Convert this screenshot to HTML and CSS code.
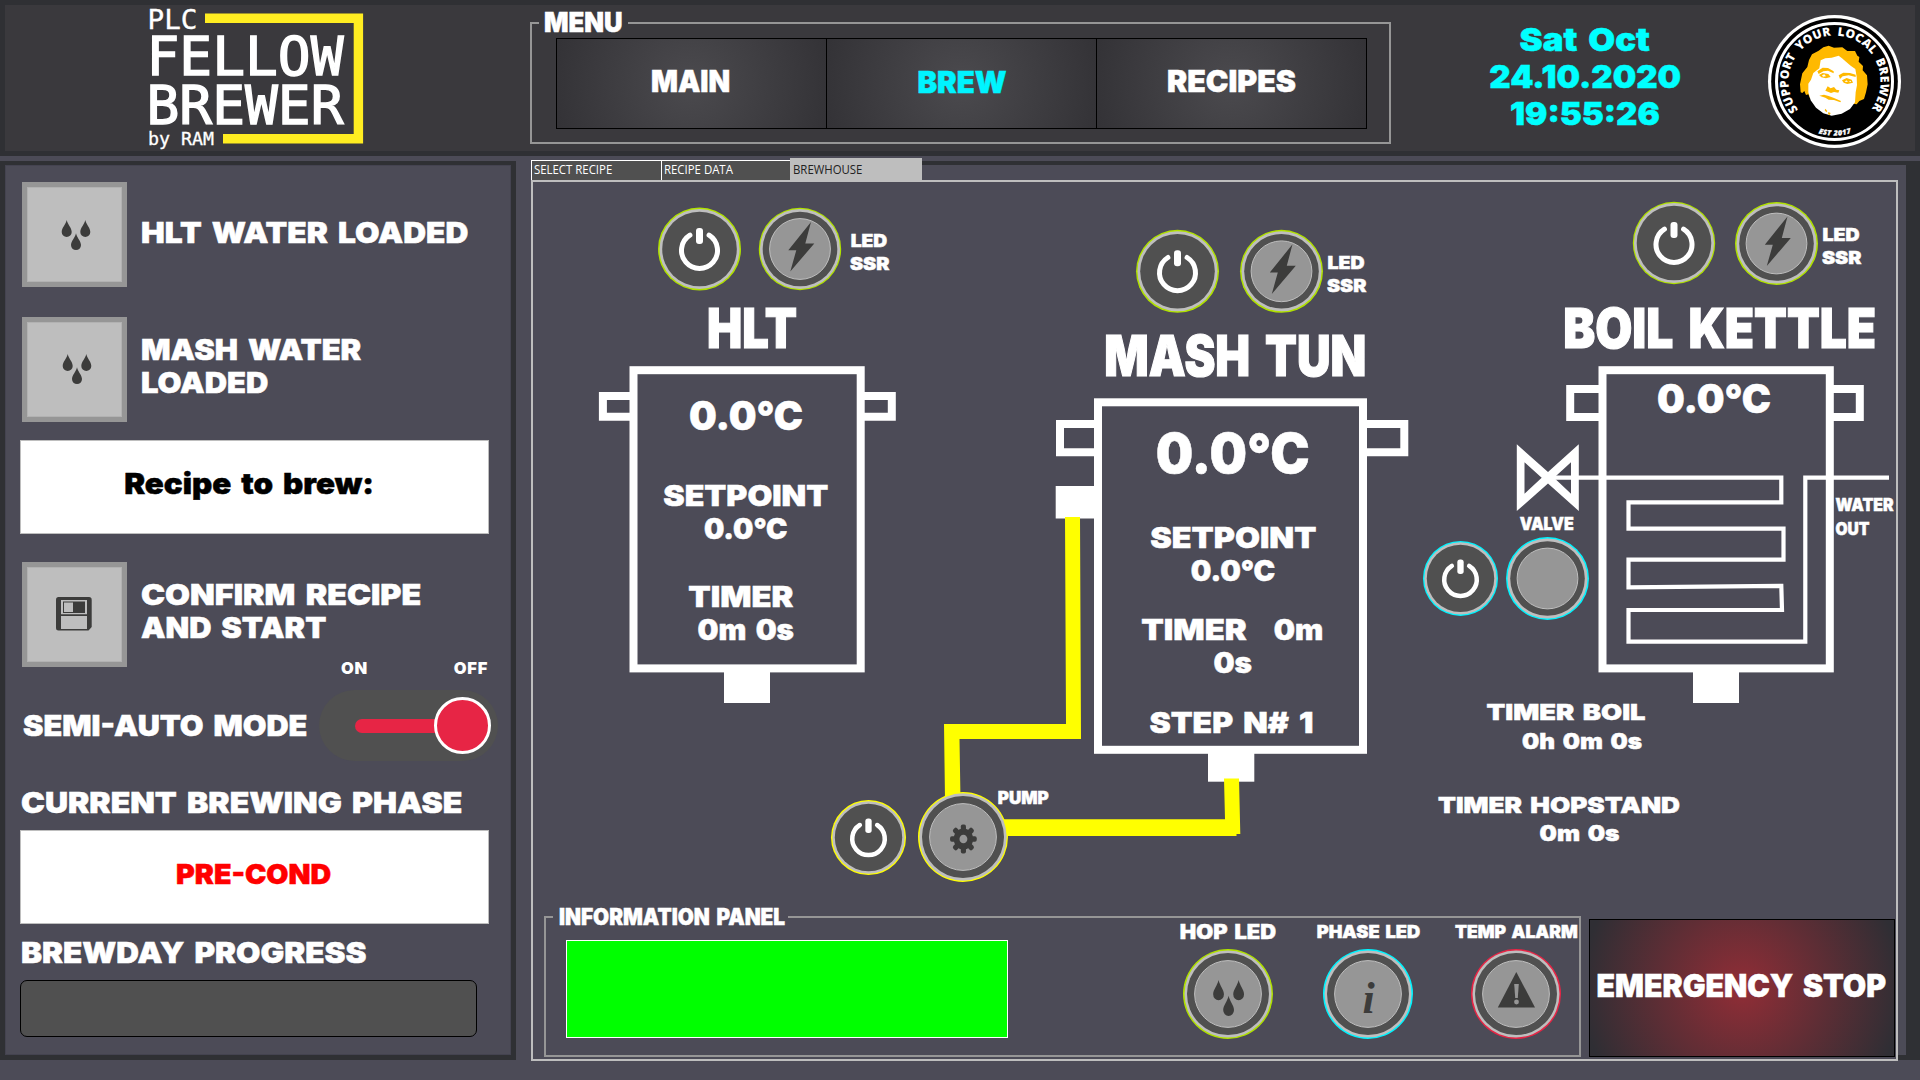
FILE: index.html
```
<!DOCTYPE html>
<html lang="en">
<head>
<meta charset="utf-8">
<title>Fellow Brewer PLC</title>
<link rel="stylesheet" href="styles.css">
</head>
<body>
<svg class="defs" width="0" height="0" aria-hidden="true">
  <defs>
    <path id="drop" d="M0,-8.5 C1,-4 5,-0.5 5,3.4 A5,5 0 0 1 -5,3.4 C-5,-0.5 -1,-4 0,-8.5Z"/>
    <g id="drops"><use href="#drop" x="-9.3" y="-6.5"/><use href="#drop" x="9.3" y="-6.5"/><use href="#drop" x="0" y="6.7"/></g>
    <g id="power">
      <circle r="40" fill="#bebebe"/><circle r="37.3" fill="#505050"/>
      <path d="M-9.6,-13.8 A18,18 0 1 0 9.6,-13.8" fill="none" stroke="#fff" stroke-width="5" stroke-linecap="round"/>
      <rect x="-3.5" y="-21" width="7" height="16" rx="3" fill="#fff"/>
    </g>
    <g id="lamp">
      <circle r="40" fill="#bebebe"/><circle r="37.3" fill="#505050"/>
      <circle r="30.4" fill="#969696" stroke="#bebebe" stroke-width="1"/>
    </g>
    <path id="bolt" d="M11,-27 L5.3,-5.6 L14.3,-5.6 L-9.7,22.6 L-3.7,1.2 L-11.7,1.2Z" fill="#3c3c3b"/>
    <rect id="tooth" x="-2.8" y="-14.5" width="5.6" height="7" rx="2"/>
  </defs>
</svg>

<header class="topbar">
  <svg class="logo" viewBox="140 5 230 146" width="230" height="146">
    <path d="M205,18.3 H358.4 V138.8 H223" fill="none" stroke="#ffed21" stroke-width="9.4"/>
    <g class="pixel">
      <text x="147.500" y="29" font-size="26.500" textLength="50" lengthAdjust="spacingAndGlyphs">PLC</text>
      <text class="big" x="146.500" y="75" font-size="53" textLength="197" lengthAdjust="spacingAndGlyphs">FELLOW</text>
      <text class="big" x="146.500" y="124" font-size="53" textLength="197" lengthAdjust="spacingAndGlyphs">BREWER</text>
      <text x="148" y="144.500" font-size="17" textLength="66" lengthAdjust="spacingAndGlyphs">by RAM</text>
    </g>
  </svg>

  <fieldset class="menu">
    <legend><span class="sx">MENU</span></legend>
    <nav>
      <a class="item main"><span class="sx">MAIN</span></a>
      <a class="item brew"><span class="sx">BREW</span></a>
      <a class="item recipes"><span class="sx">RECIPES</span></a>
    </nav>
  </fieldset>

  <div class="clock">
    <span class="sx day">Sat Oct</span>
    <span class="sx">24.10.2020</span>
    <span class="sx">19:55:26</span>
  </div>

  <svg class="badge" viewBox="21 27 405 405" width="135" height="135">
    <circle cx="223.500" cy="229.500" r="199.500" fill="#fff"/>
    <circle cx="223.500" cy="229.500" r="190" fill="#000"/>
    <circle cx="223.500" cy="229.500" r="174" fill="none" stroke="#fff" stroke-width="9"/>
    <path id="arcTop" d="M114.800,314.500 A138,138 0 1 1 332.200,314.500" fill="none"/>
    <path id="arcBottom" d="M169.500,382.500 A162,162 0 0 0 277.500,382.500" fill="none"/>
    <text class="ring"><textPath href="#arcTop" textLength="612">SUPPORT YOUR LOCAL BREWER</textPath></text>
    <text class="est"><textPath href="#arcBottom" startOffset="6" textLength="100">EST 2017</textPath></text>
    <path fill="#ffb900" d="M122,262 L120,238 L127,205 L142,186 L147,165 L156,148 L176,137 L190,127 L206,122 L222,128 L247,127 L262,138 L285,138 L292,152 L298,156 L296,170 L309,183 L308,196 L321,211 L323,238 L318,262 L312,282 L298,288 L290,298 L280,296 L150,280 L145,268 L138,270 L133,258 L127,264Z"/>
    <path fill="#fff" d="M182,166 L196,160 L215,158 L236,152 L246,160 L258,170 L272,182 L286,192 L290,215 L291,240 L287,262 L285,292 L270,312 L245,326 L215,332 L190,325 L168,308 L152,286 L145,262 L145,236 L153,224 L160,204 L178,190Z"/>
    <path fill="#ffb900" d="M172,199 L188,188 L204,189 L221,199 L221,205 L204,197 L190,199 L176,207Z M177,210 L188,204 L205,207 L212,216 L198,220 L184,217Z M236,211 L250,203 L270,204 L287,209 L287,216 L266,211 L248,214 L240,222Z M246,226 L260,219 L275,224 L279,233 L262,237 L251,233Z M203,244 L212,250 L222,246 L229,254 L238,256 L235,263 L222,261 L213,264 L196,257Z M178,272 L192,269 L206,273 L222,279 L243,288 L241,292 L222,285 L206,284 L196,278Z M196,311 L202,318 L199,322 L194,316Z M205,321 L212,324 L209,330 L204,328Z"/>
    <path fill="#fff" d="M186,211 L193,208 L198,214 L189,215Z M254,230 L259,226 L264,231Z M266,228 L273,228 L272,232Z"/>
  </svg>
</header>

<main>
  <aside class="side">
    <div class="action">
      <button class="tile"><svg viewBox="-49 -48 95 95"><use href="#drops" fill="#3c3c3b"/></svg></button>
      <div class="text"><span class="sx hlt">HLT WATER LOADED</span></div>
    </div>
    <div class="action second">
      <button class="tile"><svg viewBox="-50 -47 95 95"><use href="#drops" fill="#3c3c3b"/></svg></button>
      <div class="text up"><span class="sx mash">MASH WATER</span><span class="sx mash">LOADED</span></div>
    </div>
    <div class="readout recipe"><span class="sx">Recipe to brew:</span></div>
    <div class="action third">
      <button class="tile"><svg viewBox="0 0 95 95">
        <path fill="#3c3c3b" d="M31.500,30 H62 Q64.700,30 64.700,32.700 V60 L61.500,63.500 H31.500 Q29,63.500 29,61 V32.700 Q29,30 31.500,30Z"/>
        <path fill="#bebebe" d="M34,33 H60 V47.300 H34Z M34,49 H60 V62 H34Z"/>
        <path fill="#3c3c3b" d="M36,34.500 H58 V46 H36Z"/><path fill="#bebebe" d="M37,35.500 H46 V45 H37Z"/>
      </svg></button>
      <div class="text up"><span class="sx confirm">CONFIRM RECIPE</span><span class="sx start">AND START</span></div>
    </div>
    <div class="mode">
      <span class="sx mode-name">SEMI-AUTO MODE</span>
      <div class="switch">
        <div class="ends"><span>ON</span><span>OFF</span></div>
        <div class="track"><i class="bar"></i><i class="knob"></i></div>
      </div>
    </div>
    <h2 class="phase-title"><span class="sx">CURRENT BREWING PHASE</span></h2>
    <div class="readout phase"><span class="sx">PRE-COND</span></div>
    <h2 class="progress-title"><span class="sx">BREWDAY PROGRESS</span></h2>
    <div class="progress"></div>
  </aside>

  <section class="work">
    <div class="tabs">
      <div class="tab"><span>SELECT RECIPE</span></div>
      <div class="tab"><span>RECIPE DATA</span></div>
      <div class="tab active"><span>BREWHOUSE</span></div>
      <div class="edge-top"></div>
    </div>
    <div class="row">
      <div class="page">
        <svg class="plant" viewBox="533 182 1363 723" width="1363" height="723">
          <!-- HLT -->
          <g transform="translate(699.500,249)"><circle r="41.500" class="lime"/><use href="#power"/></g>
          <g transform="translate(800,249)"><circle r="41.200" class="lime"/><use href="#lamp"/><use href="#bolt"/></g>
          <g class="vessel">
            <rect x="633.500" y="370.200" width="227.200" height="298.200"/>
            <path d="M633,396 H602.900 V416.800 H633 M861,396 H891.800 V416.800 H861"/>
          </g>
          <rect x="724" y="670" width="46" height="33" fill="#fff"/>
          <!-- mash tun -->
          <g transform="translate(1177.500,271.300)"><circle r="41.500" class="lime"/><use href="#power"/></g>
          <g transform="translate(1281.500,271.300)"><circle r="41.500" class="lime"/><use href="#lamp"/><use href="#bolt"/></g>
          <g class="vessel">
            <rect x="1098" y="402.300" width="265" height="347.500"/>
            <path d="M1098,424 H1060 V452.300 H1098 M1363,424 H1404.300 V452.300 H1363"/>
          </g>
          <rect x="1055.700" y="486" width="40" height="32.500" fill="#fff"/>
          <rect x="1208" y="752" width="46.300" height="29.700" fill="#fff"/>
          <!-- wort pipes -->
          <path fill="#ff0" d="M1065,517 H1080 L1081,739 H959.500 L960.500,800 H945 L944,724 H1066Z"/>
          <path fill="#ff0" d="M1000,819.300 H1225 L1224,778.500 H1239 L1240.300,834 H1236.500 V836 H1000Z"/>
          <!-- pump -->
          <g transform="translate(868.500,837.500) scale(.904)"><circle r="41.500" class="yellow"/><use href="#power"/></g>
          <g transform="translate(963,837)">
            <circle r="45" class="yellow"/><circle r="43.700" fill="#bebebe"/><circle r="41" fill="#505050"/>
            <circle r="33.400" fill="#969696" stroke="#bebebe"/>
            <g transform="translate(.4,2) scale(.92,1)" fill="#3c3c3b"><circle r="10.600"/>
              <use href="#tooth"/><use href="#tooth" transform="rotate(45)"/><use href="#tooth" transform="rotate(90)"/><use href="#tooth" transform="rotate(135)"/>
              <use href="#tooth" transform="rotate(180)"/><use href="#tooth" transform="rotate(225)"/><use href="#tooth" transform="rotate(270)"/><use href="#tooth" transform="rotate(315)"/>
              <circle r="4.300" fill="#969696"/></g>
          </g>
          <!-- boil kettle -->
          <g transform="translate(1674,243)"><circle r="41.200" class="lime"/><use href="#power"/></g>
          <g transform="translate(1776.500,243.500)"><circle r="41.500" class="lime"/><use href="#lamp"/><use href="#bolt"/></g>
          <g class="vessel">
            <rect x="1602.500" y="370.200" width="227.300" height="298.200"/>
            <path d="M1602,389 H1570.200 V417 H1602 M1830,389 H1859.800 V417 H1830"/>
          </g>
          <rect x="1693" y="670" width="46" height="33" fill="#fff"/>
          <path fill="#fff" fill-rule="evenodd" d="M1516.800,444.300 L1548,472 L1578.800,444.300 V511 L1548,483.500 L1516.800,511Z M1524.500,462.300 V493.700 L1541.700,477.700Z M1571,462.300 V493.700 L1554,477.700Z"/>
          <path fill="none" stroke="#fff" stroke-width="4.200" d="M1550,477.700 H1781.300 V502.300 H1628.500 V528.700 H1783.500 V559.700 H1628.500 V587.300 L1781.300,585.800 L1782,610 H1628.500 V641.700 H1805.300 V477.700 H1889"/>
          <g transform="translate(1460.500,578.400) scale(.904)"><circle r="41.500" class="cyan"/><use href="#power"/></g>
          <g transform="translate(1547.500,578.500)"><circle r="41.500" class="cyan"/><use href="#lamp"/></g>

          <g class="title">
            <text x="752" y="348" font-size="55" textLength="90" lengthAdjust="spacingAndGlyphs">HLT</text>
            <text x="1235.300" y="376" font-size="56" textLength="262" lengthAdjust="spacingAndGlyphs">MASH TUN</text>
            <text x="1719.700" y="348" font-size="55" textLength="313" lengthAdjust="spacingAndGlyphs">BOIL KETTLE</text>
          </g>
          <g class="value">
            <text x="746" y="430" font-size="39.500" textLength="114" lengthAdjust="spacingAndGlyphs">0.0°C</text>
            <text x="745.800" y="506" textLength="165" lengthAdjust="spacingAndGlyphs">SETPOINT</text>
            <text x="745.700" y="539" textLength="83.500" lengthAdjust="spacingAndGlyphs">0.0°C</text>
            <text x="740.800" y="607" textLength="105" lengthAdjust="spacingAndGlyphs">TIMER</text>
            <text x="745.700" y="640" textLength="96.500" lengthAdjust="spacingAndGlyphs">0m 0s</text>
            <text x="1232.700" y="473" font-size="55" textLength="154" lengthAdjust="spacingAndGlyphs">0.0°C</text>
            <text x="1233.300" y="548" textLength="166" lengthAdjust="spacingAndGlyphs">SETPOINT</text>
            <text x="1233" y="581" textLength="84.500" lengthAdjust="spacingAndGlyphs">0.0°C</text>
            <text x="1194" y="640" textLength="105.500" lengthAdjust="spacingAndGlyphs">TIMER</text>
            <text x="1298.500" y="640" textLength="49.500" lengthAdjust="spacingAndGlyphs">0m</text>
            <text x="1232.700" y="673" textLength="38.500" lengthAdjust="spacingAndGlyphs">0s</text>
            <text x="1231.500" y="733" textLength="164" lengthAdjust="spacingAndGlyphs">STEP N# 1</text>
            <text x="1714" y="413" font-size="39.500" textLength="114" lengthAdjust="spacingAndGlyphs">0.0°C</text>
          </g>
          <g class="timer">
            <text x="1566" y="720" textLength="159" lengthAdjust="spacingAndGlyphs">TIMER BOIL</text>
            <text x="1582" y="748.500" textLength="120" lengthAdjust="spacingAndGlyphs">0h 0m 0s</text>
            <text x="1559" y="812.500" textLength="242" lengthAdjust="spacingAndGlyphs">TIMER HOPSTAND</text>
            <text x="1579.500" y="840.500" textLength="80" lengthAdjust="spacingAndGlyphs">0m 0s</text>
          </g>
          <g class="tag">
            <text x="869" y="247" textLength="36.500" lengthAdjust="spacingAndGlyphs">LED</text><text x="869.700" y="270.300" textLength="39.500" lengthAdjust="spacingAndGlyphs">SSR</text>
            <text x="1346" y="269" textLength="37" lengthAdjust="spacingAndGlyphs">LED</text><text x="1346.700" y="292" textLength="39.500" lengthAdjust="spacingAndGlyphs">SSR</text>
            <text x="1841" y="241" textLength="37" lengthAdjust="spacingAndGlyphs">LED</text><text x="1841.700" y="264" textLength="39.500" lengthAdjust="spacingAndGlyphs">SSR</text>
            <text x="1546.700" y="530" textLength="54" lengthAdjust="spacingAndGlyphs">VALVE</text>
            <text x="1864.600" y="510.700" textLength="58" lengthAdjust="spacingAndGlyphs">WATER</text><text x="1852.500" y="535" textLength="34" lengthAdjust="spacingAndGlyphs">OUT</text>
            <text x="1023.200" y="804" textLength="51" lengthAdjust="spacingAndGlyphs">PUMP</text>
          </g>
        </svg>

        <div class="bottom">
          <fieldset class="info">
            <legend><span class="sx">INFORMATION PANEL</span></legend>
            <div class="screen"></div>
            <div class="led hop"><span class="sx">HOP LED</span>
              <svg viewBox="-45 -45 90 90"><circle r="45" class="lime"/><circle r="43.500" fill="#bebebe"/><circle r="41" fill="#505050"/><circle r="33.400" fill="#969696" stroke="#bebebe"/><use href="#drops" fill="#3c3c3b" transform="translate(.6,4) scale(1.08,1.2)"/></svg></div>
            <div class="led phase-led"><span class="sx">PHASE LED</span>
              <svg viewBox="-45 -45 90 90"><circle r="45" class="cyan"/><circle r="43.500" fill="#bebebe"/><circle r="41" fill="#505050"/><circle r="33.400" fill="#969696" stroke="#bebebe"/><text class="glyph-i" x="0.500" y="19">i</text></svg></div>
            <div class="led alarm"><span class="sx">TEMP ALARM</span>
              <svg viewBox="-45 -45 90 90"><circle r="45" class="red"/><circle r="43.500" fill="#bebebe"/><circle r="41" fill="#505050"/><circle r="33.400" fill="#969696" stroke="#bebebe"/><path fill="#3c3c3b" d="M.3,-22 L19,13.500 H-18.200Z"/><path fill="#969696" d="M-1.800,-10 H2.800 L1.800,4 H-.8Z"/><circle cx=".5" cy="8" r="2.400" fill="#969696"/></svg></div>
          </fieldset>
          <button class="stop"><span class="sx">EMERGENCY STOP</span></button>
        </div>
      </div>
      <div class="edge-right"></div>
    </div>
  </section>
</main>
</body>
</html>
```
FILE: styles.css
```
* { box-sizing: border-box; }
body {
  margin: 0; width: 1920px; height: 1080px; overflow: hidden;
  background: #4c4b57; color: #fff;
  font: 900 28.9px/33px Inter, "Liberation Sans", sans-serif;
}
.defs { display: block; }
svg { display: block; }
.sx { display: block; white-space: nowrap; width: max-content; transform-origin: 50% 50%; word-spacing: .12em; -webkit-text-stroke: .5px currentColor; }
fieldset { margin: 0; padding: 0; min-width: 0; border: 2px solid #969696; }
button { font: inherit; color: inherit; padding: 0; margin: 0; }
h2 { font: inherit; margin: 0; }
.lime { fill: #b0e100; }
.cyan { fill: #00f4ff; }
.yellow { fill: #ff0; }
.red { fill: #e72545; }

/* top bar */
.topbar { display: flex; align-items: flex-start; height: 156px; border: 5px solid #2f3034; background: #3a393d; }
.logo { margin-left: 135px; }
.pixel text { font-family: "DejaVu Sans Mono", monospace; font-weight: 400; fill: #fff; stroke: #fff; stroke-width: .3px; }
.pixel text.big { stroke-width: 1.4px; }
.menu { margin: 5px 0 0 160px; width: 861px; height: 134px; }
.menu legend { display: flex; justify-content: center; width: 89px; margin-left: 7px; padding: 0 0 1px; font-size: 27px; line-height: 25px; }
.menu legend .sx { transform: scaleX(.95); margin: 0 -10px; }
.menu nav { display: flex; margin: 2px 0 0 24px; }
.item {
  display: flex; justify-content: center; align-items: center;
  width: 271px; height: 91px; border: 1px solid #000; font-size: 30.3px;
  background: radial-gradient(circle at 50% 50%, #4b4a4e, #323135 150px);
  padding-bottom: 5px;
}
.item + .item { margin-left: -1px; }
.main { padding-right: 2px; }
.main .sx { transform: scaleX(.93); }
.brew { color: #00f4ff; padding-bottom: 3px; }
.brew .sx { transform: scaleX(.97); }
.recipes .sx { transform: scaleX(1); }
.clock { display: flex; flex-direction: column; align-items: center; width: 240px; margin: 16px 0 0 74px; font-size: 31.8px; line-height: 37px; color: #0ff; }
.clock .sx { transform: scaleX(1.04); }
.clock .day { transform: scaleX(1.09); }
.badge { margin: 9px 0 0 62px; }
.ring { font: 800 36px "Open Sans", sans-serif; fill: #fff; word-spacing: 8px; }
.est { font: italic 800 21px "Open Sans", sans-serif; fill: #fff; stroke: #fff; stroke-width: 1px; }

main { display: flex; gap: 15px; }

/* side panel */
.side { width: 516px; height: 899px; margin-top: 5px; padding: 17px 0 0 17px; border: 5px solid #2f3034; border-top-width: 4px; box-shadow: inset 0 0 0 1px #444350; }
.side .sx { transform-origin: 0 50%; }
.action { display: flex; align-items: center; gap: 14px; height: 105px; }
.second { margin-top: 30px; }
.third { margin-top: 28px; }
.tile { width: 105px; height: 105px; flex: none; border: 5px solid #969696; background: #bebebe; box-shadow: inset 0 0 0 1px #b2b2b2; }
.tile svg { width: 95px; height: 95px; }
.text { padding-bottom: 4px; }
.text.up { padding-bottom: 7px; }
.sx.hlt { transform: scaleX(1.096); }
.sx.mash { transform: scaleX(1.07); }
.sx.confirm { transform: scaleX(1.115); }
.sx.start { transform: scaleX(1.066); }
.readout { display: flex; justify-content: center; align-items: center; width: 469px; height: 94px; margin-left: -2px; padding: 0 10px 7px 0; background: #fff; border: 1px solid #bebebe; }
.side .readout .sx { transform-origin: 50% 50%; }
.recipe { margin-top: 18px; color: #000; }
.recipe .sx { transform: scaleX(1.085); }
.phase { margin-top: 11px; padding: 0 1px 5px 0; color: #f00; font-size: 27.5px; }
.phase .sx { transform: scaleX(1.04); }
.mode { display: flex; align-items: flex-end; justify-content: space-between; width: 476px; height: 101px; margin-top: -7px; }
.mode-name { margin-left: 1px; line-height: 71px; transform: scaleX(1.061); }
.switch { width: 179px; }
.ends { display: flex; justify-content: space-between; padding: 0 10px 2px 22px; margin-bottom: 13px; font-size: 16.5px; line-height: 14px; letter-spacing: .7px; }
.track { display: flex; align-items: center; height: 71px; padding: 0 7px 0 36px; border-radius: 36px; background: #505050; }
.bar { flex: 1; height: 14px; margin-right: -4px; border-radius: 7px 0 0 7px; background: #e72545; }
.knob { width: 57px; height: 57px; border: 3.5px solid #fff; border-radius: 50%; background: #e72545; }
.phase-title { margin-top: 25px; margin-left: -1px; }
.phase-title .sx { transform: scaleX(1.106); }
.progress-title { margin-top: 12px; margin-left: -1px; }
.progress-title .sx { transform: scaleX(1.089); }
.progress { width: 457px; height: 57px; margin: 11px 0 0 -2px; border: 1px solid #000; border-radius: 7px; background: #505050; }

/* work area */
.work { width: 1389px; margin-top: 2px; }
.tabs { display: flex; align-items: flex-end; height: 22px; }
.tab { width: 129.5px; height: 20px; padding: 0 0 0 2px; border: 1px solid #fff; border-width: 1px 0 0 1px; background: #505050; font: 400 12px/18px "Open Sans", sans-serif; overflow: hidden; }
.tab span { display: block; width: max-content; transform: scaleX(.95); transform-origin: 0 50%; }
.tab.active { width: 132px; height: 22px; padding-left: 3px; border: 0; background: #bebebe; color: #222; line-height: 24px; }
.edge-top { flex: 1; height: 19px; border: solid #2f3034; border-width: 4px 14px 0 0; }
.row { display: flex; }
.page { width: 1367px; height: 881px; border: 2px solid #bebebe; }
.edge-right { flex: 1; height: 880px; border: solid #2f3034; border-width: 0 14px 5px 0; }

.plant text { text-anchor: middle; fill: #fff; stroke: #fff; stroke-width: .5px; word-spacing: .12em; }
.plant .title text { stroke-width: 1.2px; }
.value { font-size: 28.9px; }
.timer { font-size: 22px; }
.tag { font-size: 17.7px; }
.vessel rect, .vessel path { fill: none; stroke: #fff; stroke-width: 8px; }
.vessel path { stroke-linejoin: miter; }

.bottom { display: flex; height: 154px; padding-left: 11px; }
.info { display: flex; width: 1037px; height: 152px; }
.info legend { display: flex; justify-content: center; width: 235px; margin-left: 7px; padding: 0 0 1px 2px; font-size: 22.4px; line-height: 23px; }
.info legend .sx { transform: scaleX(.927); margin: 0 -10px; }
.screen { width: 442px; height: 98px; margin: 11px 0 0 20px; border: 1px solid #fff; background: #0f0; }
.led { display: flex; flex-direction: column; align-items: center; width: 120px; margin-top: -5px; font-size: 17.8px; line-height: 16px; }
.led svg { width: 90px; height: 90px; margin-top: 9px; }
.hop { margin-left: 160px; font-size: 19.5px; }
.hop .sx { transform: scaleX(1.12); }
.phase-led { margin-left: 20px; }
.phase-led .sx { transform: scaleX(1.025); }
.alarm { margin-left: 28px; }
.alarm .sx { transform: scaleX(.985); }
.glyph-i { font: italic 700 44px "Liberation Serif", serif; fill: #3c3c3b; text-anchor: middle; }
.stop {
  display: flex; justify-content: center; align-items: center;
  width: 306px; height: 138px; margin: 14px 0 0 8px; padding: 0 2px 6px 0;
  border: 1px solid #000; font-size: 31.6px;
  background: radial-gradient(circle at 50% 50%, #912d36, #2f2e34 160px);
}
.stop .sx { transform: scaleX(.957); }
```
